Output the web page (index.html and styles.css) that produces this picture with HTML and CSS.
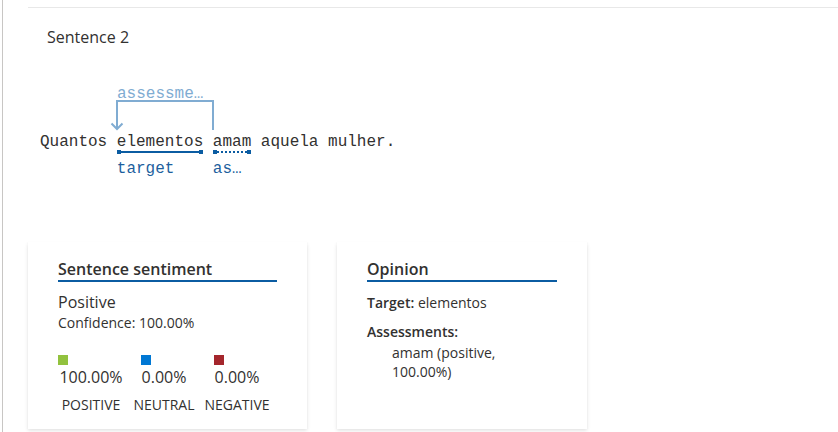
FILE: index.html
```html
<!DOCTYPE html>
<html lang="en">
<head>
<meta charset="utf-8">
<title>Sentence 2</title>
<link rel="stylesheet" href="styles.css">
</head>
<body>
<div class="panel">
  <div class="rule"></div>
  <div class="sentence-title">Sentence 2</div>
  <div class="viz">
    <svg class="relation" width="200" height="60" viewBox="0 0 200 60" aria-hidden="true">
      <path d="M77 49 V21 H173 V50" fill="none" stroke="#80acd2" stroke-width="2"/>
      <path d="M71.5 43.5 L77 49 L82.5 43.5" fill="none" stroke="#80acd2" stroke-width="2"/>
    </svg>
    <span class="relation-label">assessme…</span>
    <div class="line"><span>Quantos </span><span class="ann"><span class="word">elementos</span><span class="mark solid"></span><span class="tag">target</span></span> <span class="ann"><span class="word">amam</span><span class="mark dotted"></span><span class="tag">as…</span></span> aquela mulher.</div>
  </div>
  <div class="cards">
    <section class="card card-sentiment">
      <h3 class="card-title">Sentence sentiment</h3>
      <div class="sentiment">Positive</div>
      <div class="confidence">Confidence: 100.00%</div>
      <div class="scores">
        <div class="score">
          <div class="score-top"><span class="swatch pos"></span><span class="pct">100.00%</span></div>
          <span class="score-label">POSITIVE</span>
        </div>
        <div class="score">
          <div class="score-top"><span class="swatch neu"></span><span class="pct">0.00%</span></div>
          <span class="score-label">NEUTRAL</span>
        </div>
        <div class="score">
          <div class="score-top"><span class="swatch neg"></span><span class="pct">0.00%</span></div>
          <span class="score-label">NEGATIVE</span>
        </div>
      </div>
    </section>
    <section class="card card-opinion">
      <h3 class="card-title">Opinion</h3>
      <div class="field"><span class="key">Target:</span> elementos</div>
      <div class="field field-assess"><span class="key">Assessments:</span></div>
      <div class="assessment">amam (positive, 100.00%)</div>
    </section>
  </div>
</div>
</body>
</html>
```
FILE: styles.css
```css
html, body {
  margin: 0;
  padding: 0;
  background: #ffffff;
}
body {
  font-family: "Open Sans", "Noto Sans", sans-serif;
  color: #323130;
  overflow: hidden;
}
.panel {
  margin-left: 2px;
  border-left: 1px solid #c8c6c4;
  height: 432px;
  box-sizing: border-box;
  padding-top: 7px;
}
.rule {
  margin-left: 25px;
  border-top: 1px solid #e8e8e8;
}
.sentence-title {
  margin: 18px 0 0 44px;
  font-size: 16px;
  line-height: 22px;
  height: 22px;
}
.viz {
  position: relative;
  margin: 32px 0 0 37px;
  padding-top: 52px;
  font-family: "Liberation Mono", "DejaVu Sans Mono", monospace;
  font-size: 16px;
}
.relation {
  position: absolute;
  left: 0;
  top: 0;
}
.relation-label {
  position: absolute;
  left: 77px;
  top: 5px;
  line-height: 18px;
  color: #80acd2;
}
.line {
  line-height: 20px;
  white-space: pre;
  color: #323130;
}
.ann {
  display: inline-flex;
  flex-direction: column;
}
.word {
  line-height: 20px;
}
.mark {
  height: 4px;
  margin-top: -2px;
}
.mark.solid {
  background:
    linear-gradient(#0b5ca2, #0b5ca2) left center / 4px 4px no-repeat,
    linear-gradient(#0b5ca2, #0b5ca2) right center / 4px 4px no-repeat,
    linear-gradient(#0b5ca2, #0b5ca2) center / 100% 2px no-repeat;
}
.mark.dotted {
  background:
    linear-gradient(#0b5ca2, #0b5ca2) left center / 4px 4px no-repeat,
    linear-gradient(#0b5ca2, #0b5ca2) right center / 4px 4px no-repeat,
    repeating-linear-gradient(to right, #0b5ca2 0 2px, transparent 2px 4px) center / 100% 2px no-repeat;
}
.tag {
  margin-top: 5px;
  line-height: 20px;
  color: #1d5f9e;
}
.cards {
  display: flex;
  align-items: flex-start;
  gap: 30px;
  margin: 63px 0 0 25px;
}
.card {
  background: #ffffff;
  box-shadow: 0 1.6px 3.6px rgba(0, 0, 0, 0.13), 0 0.3px 0.9px rgba(0, 0, 0, 0.11);
  box-sizing: border-box;
  height: 187px;
  padding: 16px 30px 0 30px;
}
.card-sentiment {
  width: 279px;
}
.card-opinion {
  width: 250px;
}
.card-title {
  margin: 0;
  font-size: 16px;
  font-weight: 600;
  line-height: 22px;
  border-bottom: 2px solid #0b5ca2;
  color: #323130;
}
.sentiment {
  margin-top: 9px;
  font-size: 16px;
  line-height: 22px;
}
.confidence {
  margin-top: 1px;
  font-size: 14px;
  line-height: 18px;
}
.scores {
  display: grid;
  grid-template-columns: repeat(3, 66px);
  column-gap: 7px;
  margin-top: 23px;
}
.score {
  display: flex;
  flex-direction: column;
  align-items: center;
}
.score-top {
  display: flex;
  flex-direction: column;
  align-items: flex-start;
}
.swatch {
  width: 10px;
  height: 10px;
  margin-left: -1px;
}
.swatch.pos { background: #92c23e; }
.swatch.neu { background: #0078d4; }
.swatch.neg { background: #a4262c; }
.pct {
  margin-top: 1px;
  font-size: 16px;
  line-height: 22px;
}
.score-label {
  margin-top: 8px;
  font-size: 14px;
  line-height: 18px;
  white-space: nowrap;
}
.field {
  margin-top: 12px;
  font-size: 14px;
  line-height: 18px;
}
.field-assess {
  margin-top: 11px;
}
.key {
  font-weight: 600;
}
.assessment {
  margin: 2px 0 0 25px;
  width: 120px;
  font-size: 14px;
  line-height: 19px;
}
```
